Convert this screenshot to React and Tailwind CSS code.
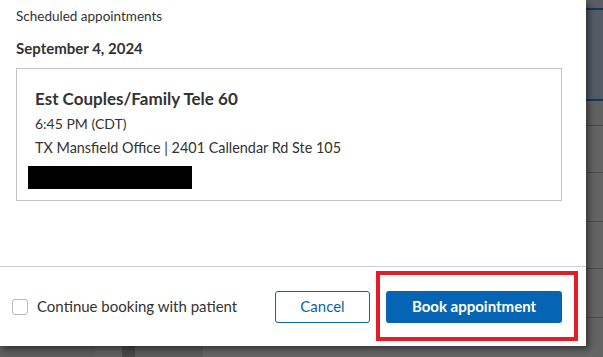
import React from "react";

const font = { fontFamily: "Lato, 'Noto Sans', Arial, sans-serif" };

function RightStrip() {
  return (
    <div className="flex-1 flex flex-col bg-[#606060]">
      <div className="h-[8px] bg-[#5a5d61]" />
      <div className="h-[2px] bg-[#12385c]" />
      <div className="h-[89px] bg-[#535b64]" />
      <div className="h-[2px] bg-[#12385c]" />
      <div className="h-[24px] bg-[#616161]" />
      <div className="h-px bg-[#4a4a4a]" />
      <div className="h-[46px] bg-[#636363]" />
      <div className="h-px bg-[#4a4a4a]" />
      <div className="h-[48px] bg-[#636363]" />
      <div className="h-px bg-[#4a4a4a]" />
      <div className="h-[46px] bg-[#636363]" />
      <div className="h-px bg-[#4a4a4a]" />
      <div className="h-[48px] bg-[#636363]" />
      <div className="h-px bg-[#4a4a4a]" />
      <div className="flex-1 bg-[#636363]" />
    </div>
  );
}

function BottomStrip() {
  return (
    <div className="flex-1 flex">
      <div className="w-[95px] bg-[#5c5c5c]" />
      <div className="w-[27px] bg-[#5f5f5f]" />
      <div className="w-[13px] bg-[#484848]" />
      <div className="w-[68px] bg-[#5a5a5a]" />
      <div className="flex-1 bg-[#646464]" />
    </div>
  );
}

export default function App() {
  return (
    <div
      className="w-[603px] h-[357px] overflow-hidden flex flex-col bg-[#606060]"
      style={font}
    >
      <div className="flex h-[346px]">
        <div className="relative z-10 w-[586px] bg-white flex flex-col shadow-[3px_3px_6px_rgba(0,0,0,0.45)]">
          <div className="px-4 pt-[7px]">
            <div className="text-[13.5px] leading-[18px] text-[#333]">
              Scheduled appointments
            </div>
            <div className="mt-[13px] text-[15px] leading-[20px] font-bold text-[#333]">
              September 4, 2024
            </div>
            <div className="mt-[10px] w-[546px] h-[133px] border border-[#c4c4c4] pl-[11px] pt-[19px]">
              <div className="pl-[7px] text-[17px] leading-[22px] font-bold text-[#333]">
                Est Couples/Family Tele 60
              </div>
              <div className="pl-[7px] mt-[2px] text-[14px] leading-[24px] text-[#333]">
                6:45 PM (CDT)
              </div>
              <div className="pl-[7px] text-[14.4px] leading-[24px] text-[#333]">
                TX Mansfield Office | 2401 Callendar Rd Ste 105
              </div>
              <div className="mt-[6px] w-[164px] h-[23px] bg-black" />
            </div>
          </div>

          <div className="flex-1" />

          <div className="h-[80px] border-t border-[#cfcfcf] flex items-center pl-3 pr-6">
            <label className="flex items-center gap-[9px] text-[15px] text-[#333]">
              <span className="w-[16px] h-[16px] rounded-[3px] border border-[#b8b8b8] bg-white" />
              Continue booking with patient
            </label>
            <div className="ml-auto flex gap-4">
              <button className="w-[95px] h-[32px] rounded-[3px] border border-[#0a64b0] bg-white text-[15px] text-[#0a64b0]">
                Cancel
              </button>
              <button className="w-[176px] h-[32px] rounded-[3px] bg-[#0565b4] text-[15px] font-bold text-white">
                Book appointment
              </button>
            </div>
          </div>

          {/* annotation box */}
          <div className="absolute left-[376px] top-[271px] w-[202px] h-[70px] border-4 border-[#e41e26]" />
        </div>
        <RightStrip />
      </div>
      <BottomStrip />
    </div>
  );
}
